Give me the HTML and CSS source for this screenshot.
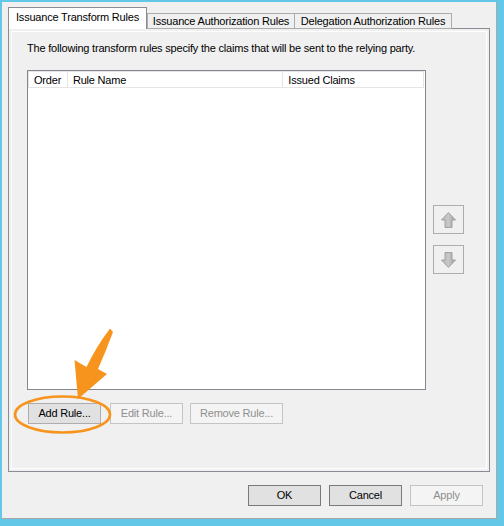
FILE: index.html
```html
<!DOCTYPE html>
<html>
<head>
<meta charset="utf-8">
<link rel="stylesheet" href="styles.css">
</head>
<body>
<div class="window">
  <div class="dialog">
    <div class="tabs">
      <div class="tab active">Issuance Transform Rules</div>
      <div class="tab tab-2">Issuance Authorization Rules</div>
      <div class="tab tab-3">Delegation Authorization Rules</div>
    </div>
    <div class="panel">
      <div class="panel-inner">
        <p class="desc">The following transform rules specify the claims that will be sent to the relying party.</p>
        <div class="list-row">
          <div class="listview">
            <div class="lv-header">
              <div class="col col-order">Order</div>
              <div class="col col-name">Rule Name</div>
              <div class="col col-claims">Issued Claims</div>
            </div>
          </div>
          <div class="side-buttons">
            <button class="icon-btn">
              <svg width="15" height="16" viewBox="0 0 15 16"><defs><linearGradient id="ga" x1="0" x2="1" y1="0" y2="0"><stop offset="0" stop-color="#b4b4b4"/><stop offset="0.5" stop-color="#c8c8c8"/><stop offset="1" stop-color="#9a9a9a"/></linearGradient></defs><path d="M7.5 0.5 L14.5 8 L11 8 L11 15.5 L4 15.5 L4 8 L0.5 8 Z" fill="url(#ga)" stroke="#a2a2a2" stroke-width="1"/></svg>
            </button>
            <button class="icon-btn">
              <svg width="15" height="16" viewBox="0 0 15 16"><defs><linearGradient id="gb" x1="0" x2="1" y1="0" y2="0"><stop offset="0" stop-color="#b4b4b4"/><stop offset="0.5" stop-color="#c8c8c8"/><stop offset="1" stop-color="#9a9a9a"/></linearGradient></defs><path d="M7.5 15.5 L14.5 8 L11 8 L11 0.5 L4 0.5 L4 8 L0.5 8 Z" fill="url(#gb)" stroke="#a2a2a2" stroke-width="1"/></svg>
            </button>
          </div>
        </div>
        <div class="rule-buttons">
          <button class="btn btn-add">Add Rule...</button>
          <button class="btn disabled btn-edit">Edit Rule...</button>
          <button class="btn disabled btn-remove">Remove Rule...</button>
        </div>
      </div>
    </div>
    <div class="footer">
      <button class="btn btn-dark">OK</button>
      <button class="btn btn-dark">Cancel</button>
      <button class="btn disabled">Apply</button>
    </div>
  </div>
  <svg class="annotation" width="504" height="526" viewBox="0 0 504 526">
    <ellipse cx="62.5" cy="414.5" rx="47.5" ry="18" fill="none" stroke="#f7941d" stroke-width="2.6"/>
    <path d="M110 328.5 L113 332 Q106 351 98 369 L107 374 L78 399 L74.5 360 L86.5 367 Q96 347 110 328.5 Z" fill="#f7941d"/>
  </svg>
</div>
</body>
</html>
```
FILE: styles.css
```css
* { box-sizing: border-box; }
html, body { margin: 0; padding: 0; }
body {
  font-family: "Liberation Sans", Arial, sans-serif;
  font-size: 11px;
  letter-spacing: -0.2px;
  color: #000;
}
.window {
  position: relative;
  width: 504px;
  height: 526px;
  background: #63c8e8;
  padding: 2px 7px 7px 2px;
}
.dialog {
  width: 495px;
  height: 517px;
  background: #f0f0f0;
  border-right: 1px solid #a8a8a8;
  border-bottom: 1px solid #a8a8a8;
  padding: 5px 6px 0 6px;
}
.tabs {
  display: flex;
  align-items: flex-end;
  height: 22px;
  margin-bottom: -1px;
  position: relative;
  z-index: 1;
}
.tab {
  height: 16px;
  border: 1px solid #acacac;
  background: #f0f0f0;
  line-height: 14px;
  text-align: center;
  white-space: nowrap;
  overflow: hidden;
}
.tab.active {
  width: 139px;
  height: 22px;
  background: #ffffff;
  border-color: #898c95;
  border-bottom: none;
  line-height: 19px;
}
.tab-2 { width: 148px; margin-left: 0; }
.tab-3 { width: 158px; margin-left: -1px; }
.panel {
  width: 482px;
  height: 444px;
  border: 1px solid #898c95;
  padding: 2px;
}
.panel-inner {
  height: 100%;
  border: 1px solid #ffffff;
  padding: 9px 0 0 15px;
}
.desc {
  margin: 0 0 14px 0;
  line-height: 15px;
  white-space: nowrap;
}
.list-row {
  display: flex;
  align-items: flex-start;
}
.listview {
  width: 399px;
  height: 320px;
  border: 1px solid #828790;
  background: #fff;
}
.lv-header {
  display: flex;
  width: 396px;
  height: 17px;
  border: 1px solid #e5e5e5;
  border-right: none;
}
.col {
  border-right: 1px solid #e5e5e5;
  padding-left: 5px;
  padding-top: 1px;
  line-height: 14px;
  white-space: nowrap;
}
.col-order { width: 39px; }
.col-name { width: 216px; }
.col-claims { width: 141px; }
.side-buttons {
  display: flex;
  flex-direction: column;
  gap: 11px;
  margin-left: 7px;
  margin-top: 135px;
}
.icon-btn {
  width: 31px;
  height: 29px;
  border: 1px solid #adadad;
  background: #f0f0f0;
  padding: 0;
  display: flex;
  align-items: center;
  justify-content: center;
}
.rule-buttons {
  display: flex;
  margin-top: 13px;
  padding-left: 1px;
}
.btn {
  width: 73px;
  height: 21px;
  border: 1px solid #adadad;
  background: #e1e1e1;
  font-family: "Liberation Sans", Arial, sans-serif;
  font-size: 11px;
  letter-spacing: -0.2px;
  color: #000;
  padding: 0;
  line-height: 17px;
}
.btn.disabled {
  background: #f4f4f4;
  border-color: #c4c4c4;
  color: #8f8f8f;
}
.btn-edit { margin-left: 9px; }
.btn-remove { width: 93px; margin-left: 7px; }
.btn-dark { border-color: #7a7a7a; }
.footer {
  display: flex;
  justify-content: flex-end;
  gap: 8px;
  margin-top: 13px;
  margin-right: 7px;
}
.annotation {
  position: absolute;
  left: 0;
  top: 0;
  pointer-events: none;
}
```
